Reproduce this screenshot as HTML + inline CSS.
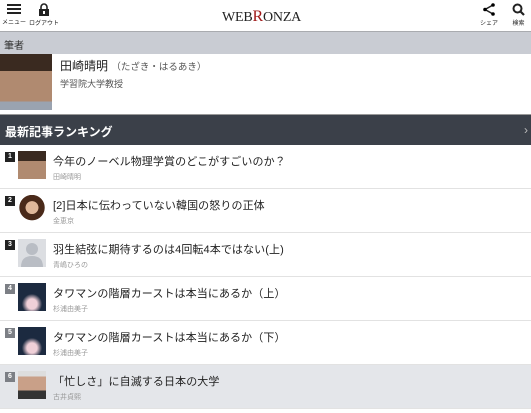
<!DOCTYPE html>
<html><head><meta charset="utf-8"><style>
*{margin:0;padding:0;box-sizing:border-box}
body{width:531px;height:413px;overflow:hidden;background:#fff;font-family:"Liberation Sans","Noto Sans CJK JP",sans-serif;position:relative}
.hdr{height:32px;border-bottom:1px solid #a9abaf;position:relative;background:#fff}
.ic{position:absolute;top:3px;text-align:center;font-size:6px;color:#222}
.logo{position:absolute;left:222px;top:8px;font-family:"Liberation Serif",serif;font-size:14px;color:#222;letter-spacing:-0.2px}
.logo b{color:#a01818;font-weight:normal;font-size:16px}
.sec{height:22px;background:#c9ccd3;font-size:10px;color:#333;padding:5px 0 0 4px}
.auth{height:61px;position:relative;border-bottom:1px solid #999}
.ph{position:absolute;left:0;top:0;width:52px;height:56px;background:linear-gradient(#3a2a20 0 30%,#b08a70 30% 85%,#9aa3b0 85%)}
.bar{height:30px;background:#3b4049;color:#fff;font-size:12px;font-weight:bold;padding:8px 0 0 5px;position:relative}
.row{height:44px;border-bottom:1px solid #e2e2e2;position:relative}
.num{position:absolute;left:5px;top:7px;width:10px;height:10px;background:#222;color:#fff;font-size:7px;text-align:center;line-height:10px;font-weight:bold}
.num.g{background:#7c7f85}
.th{position:absolute;left:18px;top:6px;width:28px;height:28px}
.t{position:absolute;left:53px;top:8px;font-size:11px;letter-spacing:0.1px;color:#222}
.a{position:absolute;left:53px;top:27px;font-size:7px;color:#999}
</style></head><body>
<div class="hdr">
<div class="ic" style="left:2px"><svg width="14" height="12"><rect y="1" width="14" height="2" fill="#222"/><rect y="5" width="14" height="2" fill="#222"/><rect y="9" width="14" height="2" fill="#222"/></svg><div>メニュー</div></div>
<div class="ic" style="left:29px"><svg width="12" height="13"><path d="M3 6V4a3 3 0 0 1 6 0v2" stroke="#222" stroke-width="1.6" fill="none"/><rect x="1" y="6" width="10" height="7" fill="#222"/><rect x="5" y="8" width="2" height="3" fill="#fff"/></svg><div>ログアウト</div></div>
<div class="logo">WEB<b>R</b>ONZA</div>
<div class="ic" style="left:480px"><svg width="12" height="13"><path d="M10 2L2 6.5L10 11" stroke="#222" stroke-width="1.5" fill="none"/><circle cx="10" cy="2" r="1.8"/><circle cx="2" cy="6.5" r="1.8"/><circle cx="10" cy="11" r="1.8"/></svg><div>シェア</div></div>
<div class="ic" style="left:512px"><svg width="13" height="13"><circle cx="5.5" cy="5.5" r="4" stroke="#222" stroke-width="2" fill="none"/><path d="M8.5 8.5L12 12" stroke="#222" stroke-width="2.2"/></svg><div>検索</div></div>
</div>
<div class="sec">筆者</div>
<div class="auth"><div class="ph"></div>
<div style="position:absolute;left:60px;top:3px;font-size:12px;color:#222">田崎晴明 <span style="font-size:9.5px;color:#555">（たざき・はるあき）</span></div>
<div style="position:absolute;left:60px;top:23px;font-size:9px;color:#555">学習院大学教授</div></div>
<div class="bar">最新記事ランキング<span style="position:absolute;right:3px;top:8px;font-weight:normal;color:#bbb">›</span></div>
<div class="row"><div class="num">1</div><div class="th" style="background:linear-gradient(#3a2a20 0 35%,#b08a70 35%)"></div><div class="t">今年のノーベル物理学賞のどこがすごいのか？</div><div class="a">田崎晴明</div></div>
<div class="row"><div class="num">2</div><div class="th" style="background:radial-gradient(circle at 50% 45%,#e0b89a 30%,#4a2a1a 32% 60%,#fff 62%)"></div><div class="t">[2]日本に伝わっていない韓国の怒りの正体</div><div class="a">金恵京</div></div>
<div class="row"><div class="num">3</div><div class="th" style="background:#dcdee2"><svg width="28" height="28"><circle cx="14" cy="10" r="6" fill="#b9bdc4"/><path d="M3 28Q3 17 14 17Q25 17 25 28Z" fill="#b9bdc4"/></svg></div><div class="t">羽生結弦に期待するのは4回転4本ではない(上)</div><div class="a">青嶋ひろの</div></div>
<div class="row"><div class="num g">4</div><div class="th" style="background:radial-gradient(circle at 50% 75%,#f0d0d8 20%,#1c2a40 40%)"></div><div class="t">タワマンの階層カーストは本当にあるか（上）</div><div class="a">杉浦由美子</div></div>
<div class="row"><div class="num g">5</div><div class="th" style="background:radial-gradient(circle at 50% 75%,#f0d0d8 20%,#1c2a40 40%)"></div><div class="t">タワマンの階層カーストは本当にあるか（下）</div><div class="a">杉浦由美子</div></div>
<div class="row" style="background:#e4e6ea"><div class="num g">6</div><div class="th" style="background:linear-gradient(#ddd 0 20%,#c9a088 20% 70%,#333 70%)"></div><div class="t">「忙しさ」に自滅する日本の大学</div><div class="a">古井貞熙</div></div>
</body></html>
